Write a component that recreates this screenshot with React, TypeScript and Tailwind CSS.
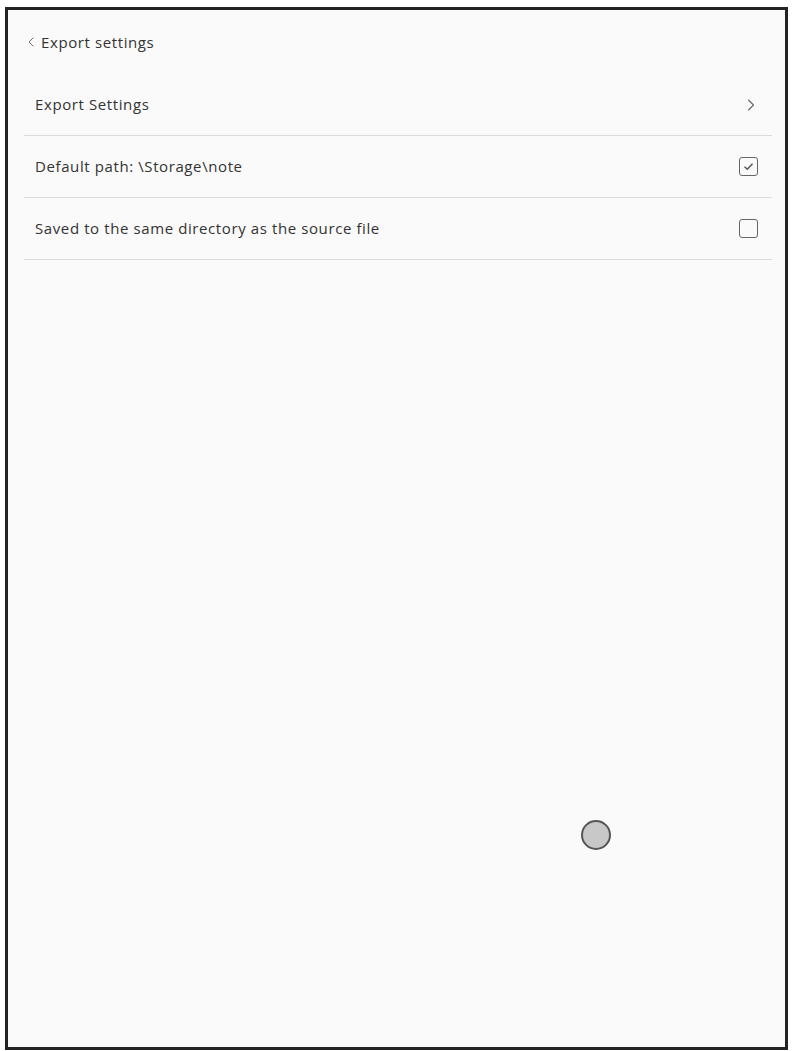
import { ChevronLeft, ChevronRight } from "lucide-react";

function Row({ label, right, }: { label: string; right: React.ReactNode }) {
  return (
    <div className="flex h-[62px] items-center justify-between border-b border-[#dcdcdc] pl-[11px] pr-[14px]">
      <span className="text-[15px] tracking-[0.6px] text-[#333]">{label}</span>
      {right}
    </div>
  );
}

export default function App() {
  return (
    <div className="min-h-[1051px] w-[793px] bg-white pl-[5px] pt-[7px] font-['Open_Sans',sans-serif]">
      <div className="relative h-[1043px] w-[783px] border-[3px] border-[#232323] bg-[#fafafa]">
        {/* header */}
        <div className="flex h-[64px] items-center pl-[15px] text-[#333]">
          <ChevronLeft size={16} strokeWidth={1.3} className="text-[#555]" />
          <span className="ml-[2px] text-[15px] tracking-[0.6px]">Export settings</span>
        </div>

        <div className="ml-[16px] mr-[13px]">
          <Row
            label="Export Settings"
            right={<ChevronRight size={20} strokeWidth={1.3} className="mr-[-3px] text-[#666]" />}
          />
          <Row
            label="Default path: \Storage\note"
            right={
              <div className="flex h-[19px] w-[19px] items-center justify-center rounded-[3px] border-[1.5px] border-[#666]">
                <svg width="13" height="13" viewBox="0 0 13 13">
                  <path d="M2.5 6.8 L5.3 9.3 L10.5 3.8" fill="none" stroke="#555" strokeWidth="1.5" />
                </svg>
              </div>
            }
          />
          <Row
            label="Saved to the same directory as the source file"
            right={<div className="h-[19px] w-[19px] rounded-[3px] border-[1.5px] border-[#666]" />}
          />
        </div>

        {/* floating pen cursor */}
        <div className="absolute left-[573px] top-[810px] h-[30px] w-[30px] rounded-full border-[2px] border-[#555] bg-[#c8c8c8]" />
      </div>
    </div>
  );
}
